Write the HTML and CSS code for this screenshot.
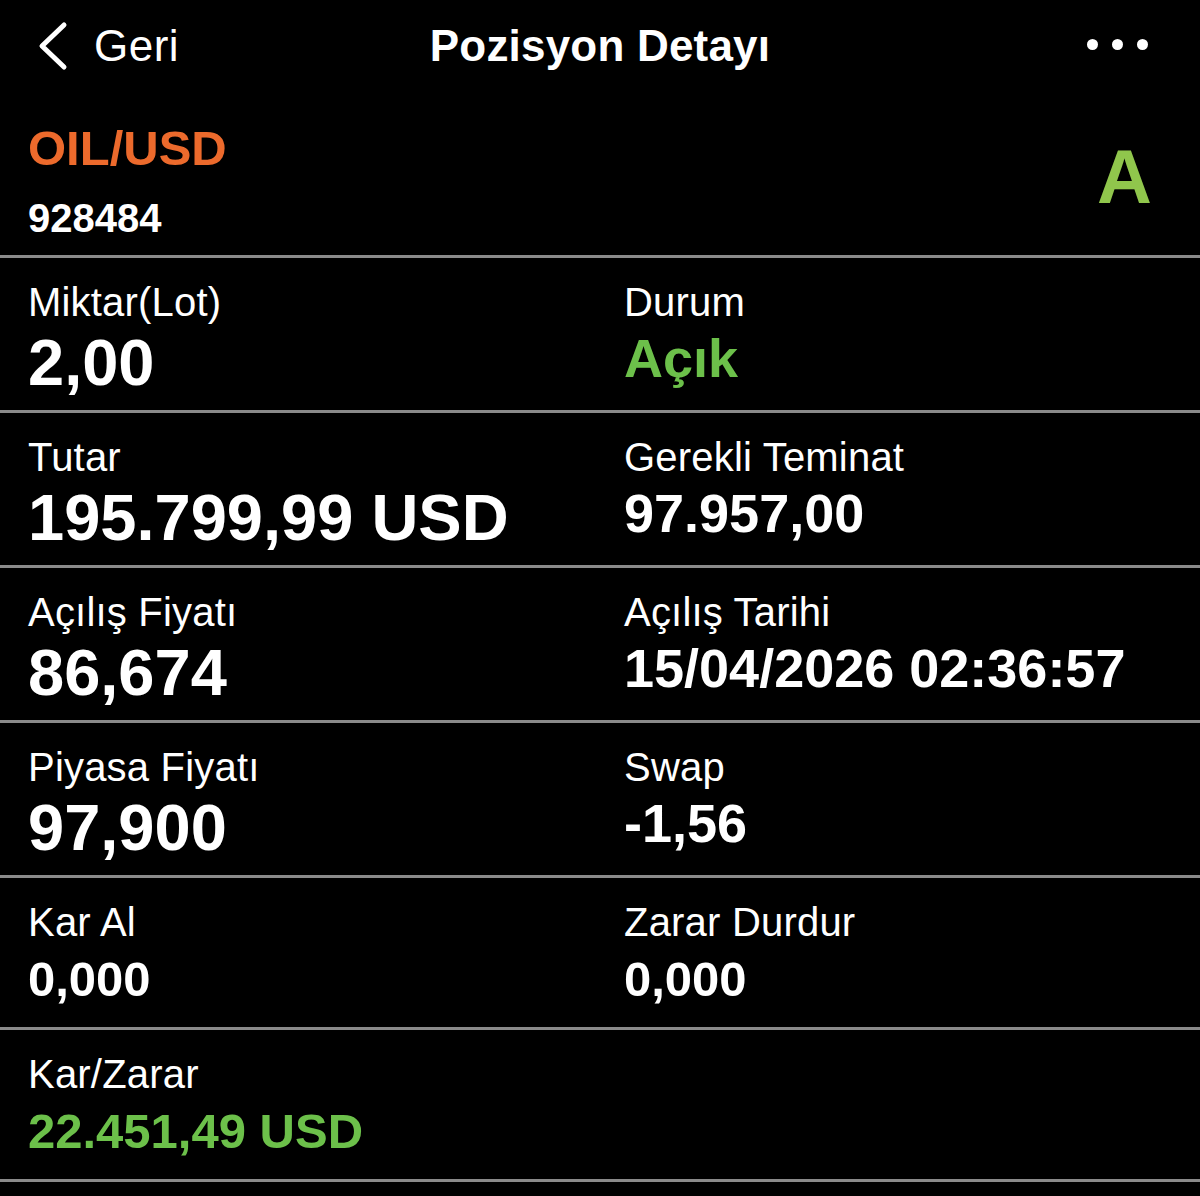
FILE: index.html
```html
<!DOCTYPE html>
<html lang="tr">
<head>
	<meta charset="UTF-8">
	<meta name="viewport" content="width=device-width, initial-scale=1.0">
	<title>Pozisyon Detayı</title>
	<link rel="stylesheet" href="styles.css">
</head>
<body>

<div class="navbar">
	<div class="nav-back">
		<svg class="chevron" width="36" height="50" viewBox="0 0 36 50">
			<path d="M30 4 L8 25 L30 46" fill="none" stroke="#fff" stroke-width="5" stroke-linecap="round" stroke-linejoin="round"/>
		</svg>
		<span>Geri</span>
	</div>
	<div class="nav-title">Pozisyon Detayı</div>
	<div class="nav-more">
		<span class="dot"></span><span class="dot"></span><span class="dot"></span>
	</div>
</div>

<div class="symbol-head">
	<div>
		<div class="symbol">OIL/USD</div>
		<div class="position-id">928484</div>
	</div>
	<div class="side">A</div>
</div>

<div class="detail-row">
	<div class="cell">
		<div class="label">Miktar(Lot)</div>
		<div class="value big">2,00</div>
	</div>
	<div class="cell">
		<div class="label">Durum</div>
		<div class="value mid green">Açık</div>
	</div>
</div>

<div class="detail-row">
	<div class="cell">
		<div class="label">Tutar</div>
		<div class="value big">195.799,99 USD</div>
	</div>
	<div class="cell">
		<div class="label">Gerekli Teminat</div>
		<div class="value mid">97.957,00</div>
	</div>
</div>

<div class="detail-row">
	<div class="cell">
		<div class="label">Açılış Fiyatı</div>
		<div class="value big">86,674</div>
	</div>
	<div class="cell">
		<div class="label">Açılış Tarihi</div>
		<div class="value mid">15/04/2026 02:36:57</div>
	</div>
</div>

<div class="detail-row">
	<div class="cell">
		<div class="label">Piyasa Fiyatı</div>
		<div class="value big">97,900</div>
	</div>
	<div class="cell">
		<div class="label">Swap</div>
		<div class="value mid">-1,56</div>
	</div>
</div>

<div class="detail-row short">
	<div class="cell">
		<div class="label">Kar Al</div>
		<div class="value small">0,000</div>
	</div>
	<div class="cell">
		<div class="label">Zarar Durdur</div>
		<div class="value small">0,000</div>
	</div>
</div>

<div class="detail-row short">
	<div class="cell">
		<div class="label">Kar/Zarar</div>
		<div class="value small green">22.451,49 USD</div>
	</div>
</div>

</body>
</html>
```

FILE: styles.css
```css
html {
	background-color: #000;
	color: #fff;
	font-family: "Liberation Sans", Arial, Helvetica, sans-serif;
}
body {
	margin: 0;
}

/* top bar */
.navbar {
	display: grid;
	grid-template-columns: 1fr auto 1fr;
	align-items: center;
	height: 92px;
	padding: 0 52px;
}
.nav-back {
	display: flex;
	align-items: center;
	gap: 24px;
	margin-left: -18px;
	font-size: 44px;
	letter-spacing: 0.5px;
}
.chevron {
	display: block;
}
.nav-title {
	font-size: 44px;
	font-weight: bold;
	letter-spacing: 0.2px;
}
.nav-more {
	display: flex;
	justify-content: flex-end;
	gap: 14px;
	margin-top: -4px;
}
.dot {
	width: 11px;
	height: 11px;
	border-radius: 50%;
	background: #fff;
}

/* symbol header */
.symbol-head {
	display: flex;
	justify-content: space-between;
	align-items: center;
	padding: 29px 48px 13px 28px;
	border-bottom: 3px solid #8a8a8a;
}
.symbol {
	color: #ec6a2c;
	font-size: 49px;
	font-weight: bold;
	line-height: 54px;
}
.position-id {
	font-size: 40px;
	font-weight: bold;
	line-height: 48px;
	margin-top: 19px;
}
.side {
	color: #90c64c;
	font-size: 76px;
	font-weight: bold;
	line-height: 76px;
	margin-bottom: 10px;
}

/* detail rows */
.detail-row {
	display: grid;
	grid-template-columns: 596px 1fr;
	padding: 20px 28px 15px;
	border-bottom: 3px solid #8a8a8a;
}
.label {
	font-size: 40px;
	line-height: 48px;
	letter-spacing: 0.2px;
}
.value {
	font-weight: bold;
	margin-top: 5px;
}
.value.big {
	font-size: 65px;
	line-height: 64px;
}
.value.mid {
	font-size: 54px;
	line-height: 54px;
}
.value.small {
	font-size: 49px;
	line-height: 56px;
}
.short {
	padding-bottom: 20px;
}
.green {
	color: #6cc04a;
}
```
